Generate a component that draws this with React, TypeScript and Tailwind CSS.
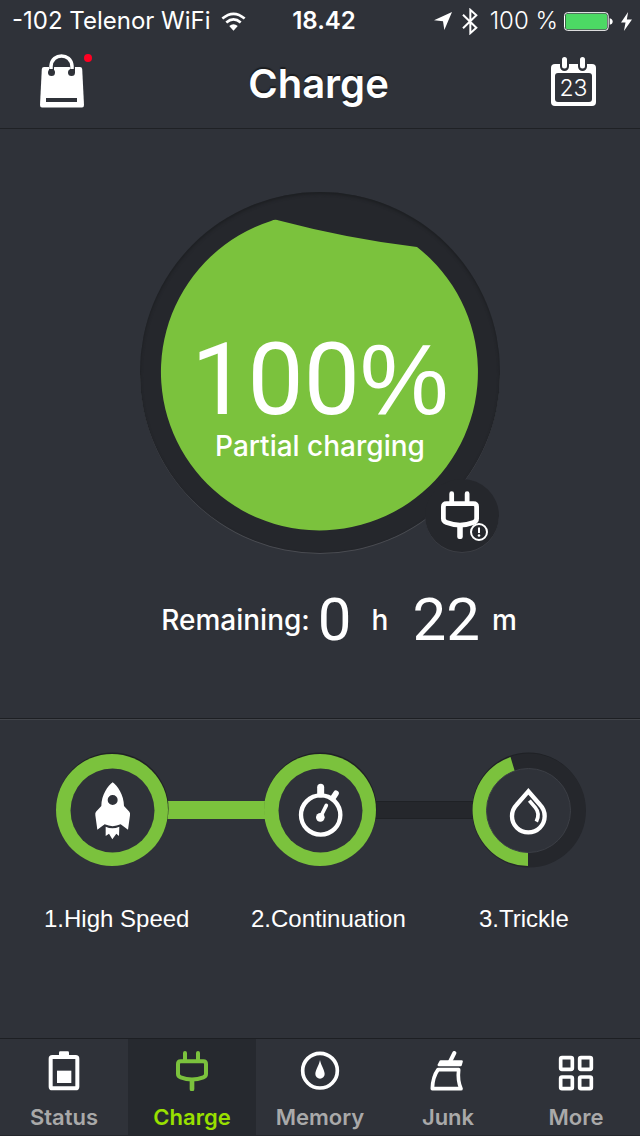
import type { ReactNode } from "react";
import clsx from "clsx";

type IconProps = { className?: string };

const GREEN = "#7bc23d";

function WifiIcon() {
  return (
    <svg viewBox="0 0 76 58" className="h-[19px] w-[25px]" fill="none" stroke="#fff" strokeWidth="8">
      <path d="M4 20 Q38 -9 72 20" />
      <path d="M16 32 Q38 13 60 32" />
      <path d="M38 57 L25 43 Q38 32 51 43 Z" fill="#fff" stroke="none" />
    </svg>
  );
}

function LocationIcon() {
  return (
    <svg viewBox="0 0 54 54" className="size-[18px]" fill="#fff">
      <path d="M54 0 L31 54 L27 28 L0 25 Z" />
    </svg>
  );
}

function BluetoothIcon() {
  return (
    <svg viewBox="0 0 48 80" className="h-[27px] w-4" fill="none" stroke="#fff" strokeWidth="6">
      <path d="M3 20 L43 59 L25 75 V5 L43 21 L3 60" />
    </svg>
  );
}

function BatteryLevel() {
  return (
    <svg viewBox="0 0 147 56" className="h-[19px] w-[49px]">
      <rect x="1.5" y="1.5" width="131" height="53" rx="9" fill="none" stroke="#fff" strokeWidth="3" />
      <rect x="5" y="5" width="124" height="46" rx="5" fill="#4cd964" />
      <path d="M137 18 Q146 20 146 28 Q146 36 137 38 Z" fill="#fff" />
    </svg>
  );
}

function BoltIcon() {
  return (
    <svg viewBox="0 0 34 58" className="h-[19px] w-[11px]" fill="#fff">
      <path d="M22 0 L0 32 H14 L9 58 L34 23 H18 Z" />
    </svg>
  );
}

function BagIcon() {
  return (
    <svg viewBox="0 0 48 56" className="h-14 w-12">
      <path d="M6 13 H42 Q44 13 44.200 15 L46 51 Q46 53.500 44 53.500 H4 Q2 53.500 2 51 L3.800 15 Q4 13 6 13 Z" fill="#fff" />
      <path d="M13.500 19 V14 C13.500 -1 34.500 -1 34.500 14 V19" fill="none" stroke="#2f3239" strokeWidth="5" />
      <circle cx="13.500" cy="18.500" r="3.500" fill="#2f3239" />
      <circle cx="33.500" cy="18.500" r="3.500" fill="#2f3239" />
      <path d="M13 15 V12 C14 -1.500 33 -1.500 34 12 V15" fill="none" stroke="#fff" strokeWidth="3.500" />
      <rect x="8" y="44" width="31" height="4" fill="#2f3239" />
    </svg>
  );
}

function CalendarIcon() {
  return (
    <svg viewBox="0 0 45 50" className="h-[50px] w-[45px]">
      <rect y="7" width="45" height="42" rx="4" fill="#fff" />
      <rect x="4" y="16" width="37" height="29" rx="3" fill="#2f3239" />
      <g strokeLinecap="round">
        <path d="M13.500 3 V9.500 M31.500 3 V9.500" stroke="#2f3239" strokeWidth="9" />
        <path d="M13.500 2.500 V9 M31.500 2.500 V9" stroke="#fff" strokeWidth="5" />
      </g>
      <text x="22.500" y="39" textAnchor="middle" fontSize="23" fill="#fff" className="font-['Inter'] font-light">
        23
      </text>
    </svg>
  );
}

function PlugIcon({ className }: IconProps) {
  return (
    <svg viewBox="0 0 96 120" className={className} fill="none" stroke="currentColor" strokeWidth="12">
      <path d="M27 6 V30 M66 6 V30" strokeLinecap="round" strokeWidth="12" />
      <path d="M14 31 H82 Q90 31 90 39 V69 Q90 76 82 79 Q48 92 14 79 Q6 76 6 69 V39 Q6 31 14 31 Z" />
      <path d="M48 88 V114" strokeLinecap="round" strokeWidth="14" />
    </svg>
  );
}

function StatusIcon({ className }: IconProps) {
  return (
    <svg viewBox="0 0 120 120" className={className} fill="currentColor">
      <rect x="45" y="1" width="30" height="16" rx="4" />
      <rect x="20" y="18" width="80" height="94" rx="5" fill="none" stroke="currentColor" strokeWidth="12" />
      <rect x="39" y="59" width="43" height="37" />
    </svg>
  );
}

function MemoryIcon({ className }: IconProps) {
  return (
    <svg viewBox="0 0 120 120" className={className}>
      <circle cx="60" cy="59" r="52" fill="none" stroke="currentColor" strokeWidth="11" />
      <path d="M60 27 C63 43 74 58 74 69 A14 14 0 0 1 46 69 C46 58 57 43 60 27 Z" fill="currentColor" />
    </svg>
  );
}

function JunkIcon({ className }: IconProps) {
  return (
    <svg viewBox="0 0 120 120" className={className} fill="none" stroke="currentColor" strokeLinejoin="round">
      <path d="M79 6 L67 30" strokeWidth="12" strokeLinecap="round" />
      <path d="M38 31 H101 L98 42 H32 Z" fill="currentColor" strokeWidth="7" />
      <path d="M30 56 Q14 78 13 113 H99 Q88 88 92 56 Z" strokeWidth="11" />
    </svg>
  );
}

function MoreIcon({ className }: IconProps) {
  return (
    <svg viewBox="0 0 120 120" className={className} fill="none" stroke="currentColor" strokeWidth="11">
      <rect x="14" y="20" width="35" height="35" rx="4" />
      <rect x="71" y="20" width="35" height="35" rx="4" />
      <rect x="14" y="78" width="35" height="35" rx="4" />
      <rect x="71" y="78" width="35" height="35" rx="4" />
    </svg>
  );
}

function RocketIcon() {
  return (
    <g fill="#fff">
      <path
        fillRule="evenodd"
        d="M92 7 C106 17 126 45 126 78 L142 95 Q145 98 144 106 L138 149 L116 133 Q92 144 68 133 L46 149 L40 106 Q39 98 42 95 L58 78 C58 45 78 17 92 7 Z M92 45 A15 15 0 1 0 92 75 A15 15 0 1 0 92 45 Z"
      />
      <path d="M71 140 Q91 149 112 140 L111 168 L103 161 L91 178 L81 161 L71 168 Z" />
    </g>
  );
}

function StopwatchIcon() {
  return (
    <g fill="none" stroke="#fff" strokeLinecap="round">
      <circle cx="92" cy="105" r="59" strokeWidth="13" />
      <path d="M92 22 V42" strokeWidth="21" />
      <path d="M128 55 L138 40" strokeWidth="17" />
      <circle cx="91" cy="112" r="13" fill="#fff" stroke="none" />
      <path d="M93 108 L109 76" strokeWidth="11" />
    </g>
  );
}

function DropIcon() {
  return (
    <g fill="none" stroke="#fff">
      <path d="M91 34 L56 74 A49 49 0 1 0 126 74 Z" strokeWidth="13" />
      <path d="M94 62 L112 83 Q127 101 115 125" strokeWidth="11" />
    </g>
  );
}

// One charging stage: a full track with the finished part drawn over it
function StageRing({ partial, children }: { partial?: boolean; children: ReactNode }) {
  return (
    <svg viewBox="0 0 112 112" className="relative size-28 shrink-0 overflow-visible">
      <circle cx="56.500" cy="54.500" r="56" fill="#1f2125" />
      {partial ? (
        <>
          <circle cx="57" cy="56.500" r="57" fill="#25272c" />
          <path d="M56 112 A56 56 0 0 1 38.500 3 L43 18 L56 56 Z" fill={GREEN} />
        </>
      ) : (
        <circle cx="56" cy="56" r="56" fill={GREEN} />
      )}
      <circle cx="56.500" cy="56.500" r="42" fill="#2f3239" stroke={partial ? "#3c3f46" : "none"} />
      <svg x="26" y="26" width="60" height="60" viewBox="0 0 180 180">
        {children}
      </svg>
    </svg>
  );
}

const tabs = [
  { label: "Status", Icon: StatusIcon, width: "w-10" },
  { label: "Charge", Icon: PlugIcon, width: "w-8", active: true },
  { label: "Memory", Icon: MemoryIcon, width: "w-10" },
  { label: "Junk", Icon: JunkIcon, width: "w-10" },
  { label: "More", Icon: MoreIcon, width: "w-10" },
];

function StatusBar() {
  return (
    <div className="grid h-[42px] grid-cols-[1fr_auto_1fr] items-center pl-3 pr-2 text-2xl">
      <div className="flex items-center gap-2.5 whitespace-nowrap">
        <span>-102 Telenor WiFi</span>
        <WifiIcon />
      </div>
      <span className="pl-1 font-semibold">18.42</span>
      <div className="flex items-center justify-end">
        <LocationIcon />
        <span className="ml-2.5">
          <BluetoothIcon />
        </span>
        <span className="ml-3 mr-1.5 whitespace-nowrap font-light">100 %</span>
        <BatteryLevel />
        <span className="ml-2">
          <BoltIcon />
        </span>
      </div>
    </div>
  );
}

function Gauge() {
  return (
    <div className="relative h-[362px] w-[360px] rounded-full border-b border-[#4a4c52] bg-[#25272c] pt-[137px] text-center shadow-[inset_0_2px_3px_#1d1f22]">
      <svg viewBox="0 0 360 360" className="absolute left-0 top-0 size-[360px]">
        <path d="M131 29 Q135 27 139 28.500 Q209 47 277 55 A158.500 158.500 0 1 1 131 29 Z" fill={GREEN} />
      </svg>
      <div className="relative">
        <p className="font-['Roboto',sans-serif] text-[100px] leading-[100px]">
          100<span className="font-['Liberation_Sans',sans-serif]">%</span>
        </p>
        <p className="text-[28px] font-medium leading-8">Partial charging</p>
      </div>
      <button
        aria-label="Charging warning"
        className="absolute bottom-0 right-px flex size-[74px] justify-center rounded-full border-b border-[#3c3e44] bg-[#25272c] pr-1 pt-3"
      >
        <PlugIcon className="h-12 w-[38px]" />
        <svg viewBox="0 0 20 20" className="absolute bottom-2.5 right-2.5 size-5">
          <circle cx="10" cy="10" r="8" fill="#25272c" stroke="#fff" strokeWidth="2" />
          <path d="M10 5.500 V11" stroke="#fff" strokeWidth="2" />
          <circle cx="10" cy="13.500" r="1.300" fill="#fff" />
        </svg>
      </button>
    </div>
  );
}

export default function App() {
  return (
    <div className="flex min-h-screen flex-col bg-[#2f3239] font-['Inter',sans-serif] text-white">
      <header className="border-b border-[#1f2125]">
        <StatusBar />
        <div className="flex h-[86px] items-center justify-between pb-0.5 pl-[38px] pr-11">
          <button aria-label="Shop" className="relative pb-1">
            <BagIcon />
            <span className="absolute -right-1.5 top-0 size-2 rounded-full bg-[#ff0022]" />
          </button>
          <h1 className="text-[40px] font-semibold leading-[48px] [text-shadow:0_-2px_1px_#1b1d20]">Charge</h1>
          <button aria-label="Calendar" className="pb-1">
            <CalendarIcon />
          </button>
        </div>
      </header>

      <main className="flex flex-1 flex-col">
        <section className="flex flex-col items-center border-b border-[#1d1f23] pb-[68px] pt-[63px]">
          <Gauge />
          <div className="mt-9 flex pl-[38px] text-[28px] font-medium leading-[60px]">
            <span>Remaining:</span>
            <span className="ml-2 font-['Roboto',sans-serif] text-[60px] font-normal">0</span>
            <span className="ml-5">h</span>
            <span className="ml-6 font-['Roboto',sans-serif] text-[60px] font-normal">22</span>
            <span className="ml-3">m</span>
          </div>
        </section>

        <section className="border-t border-[#42454b] pt-[34px]">
          <div className="flex items-center px-14">
            <StageRing>
              <RocketIcon />
            </StageRing>
            <div className="-mx-1 h-[18px] flex-1 bg-[#7bc23d]" />
            <StageRing>
              <StopwatchIcon />
            </StageRing>
            <div className="-mx-1 h-[18px] flex-1 border-y border-[#1f2125] bg-[#25272c]" />
            <StageRing partial>
              <DropIcon />
            </StageRing>
          </div>
          <ol className="mt-[37px] grid grid-cols-[207fr_228fr_161fr] pl-11 font-['Liberation_Sans',sans-serif] text-2xl">
            <li>1.High Speed</li>
            <li>2.Continuation</li>
            <li>3.Trickle</li>
          </ol>
        </section>
      </main>

      <nav className="grid grid-cols-5 border-b border-t border-b-[#25272c] border-t-[#1d1f23]">
        {tabs.map(({ label, Icon, width, active }) => (
          <a
            key={label}
            href="#"
            aria-current={active ? "page" : undefined}
            className={clsx(
              "flex flex-col items-center gap-3 pb-1 pt-3 text-[22px] font-semibold leading-7",
              active ? "bg-[#26292f] text-[#99e000]" : "text-[#a9a9a9]"
            )}
          >
            <Icon className={clsx("h-10", width, active ? "text-[#7bc23d]" : "text-white")} />
            {label}
          </a>
        ))}
      </nav>
    </div>
  );
}
